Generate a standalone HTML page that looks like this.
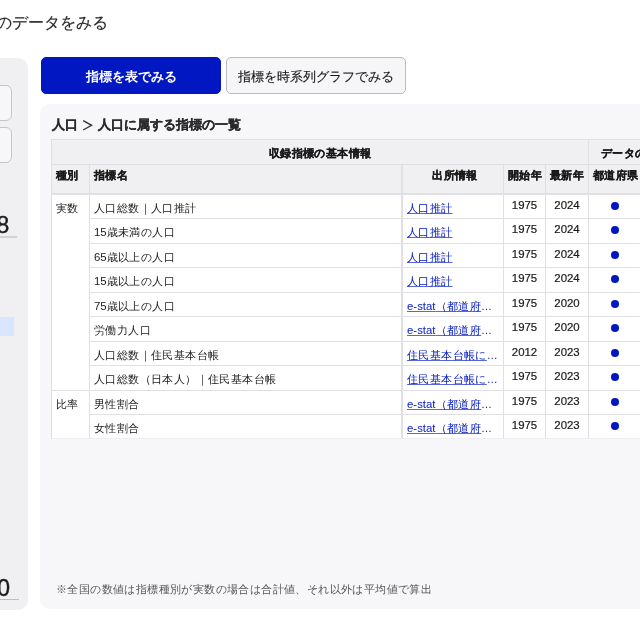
<!DOCTYPE html>
<html lang="ja">
<head>
<meta charset="utf-8">
<style>
*{box-sizing:border-box;margin:0;padding:0}
html,body{width:640px;height:638px;overflow:hidden;background:#fff}
body{will-change:transform}
body{position:relative;text-spacing-trim:space-all;font-family:"Liberation Sans",sans-serif;color:#1a1a1c}
.abs{position:absolute}
#title{left:-4px;top:13px;font-size:16px;line-height:20px;color:#2a2a2a;-webkit-text-stroke:0.15px #2a2a2a;white-space:nowrap}
#side{left:-20px;top:58px;width:48px;height:552px;background:#f0f0f3;border-radius:10px}
.inp{position:absolute;left:-40px;width:52px;height:36px;border:1px solid #c4c4c9;border-radius:6px;background:#f7f7fa}
.big{position:absolute;width:40px;font-size:23px;line-height:26px;color:#1a1a1a;-webkit-text-stroke:0.35px #1a1a1a;white-space:nowrap;text-align:right}
.uline{position:absolute;left:-20px;height:2px;background:#d2d2d6}
#strip{left:-20px;top:317px;width:34px;height:19px;background:#d9e6ff}
.btn{position:absolute;top:57px;height:36.5px;width:180px;border-radius:5px;font-size:13px;line-height:38px;text-align:center;white-space:nowrap}
#b1{left:41px;background:#0017c1;color:#fff;font-weight:bold;border:1px solid #0017c1}
#b2{left:226px;background:#f6f6f9;color:#1a1a1a;-webkit-text-stroke:0.15px #1a1a1a;border:1px solid #b8b8bd}
#main{left:40px;top:104px;width:640px;height:505px;background:#f7f7f9;border-radius:10px}
#mtitle{left:52px;top:116px;font-size:13px;line-height:18px;font-weight:bold;color:#2a2a2a;-webkit-text-stroke:0.2px #2a2a2a;white-space:nowrap}
#note{left:56px;top:580.5px;font-size:11px;letter-spacing:0.4px;line-height:16px;color:#555;white-space:nowrap}

#tbl{position:absolute;left:51px;top:139px;border-collapse:separate;border-spacing:0;table-layout:fixed;width:660px;border-left:1px solid #e0e0e4;border-top:1px solid #e0e0e4;font-size:11px;letter-spacing:0.4px;color:#1a1a1a}
#tbl th,#tbl td{border-right:1px solid #e0e0e4;border-bottom:1px solid #e0e0e4;padding:0 4px;white-space:nowrap;overflow:hidden}
#tbl th{background:#f0f0f3;font-weight:bold;text-align:center;-webkit-text-stroke:0.25px #1a1a1a}
#tbl tr.h1 th{height:25px;line-height:16px;vertical-align:top;padding-top:5px}
#tbl tr.h2 th{height:29.5px;line-height:16px;vertical-align:top;padding-top:2px;border-bottom-width:2px}
#tbl tr.h2 th.l{text-align:left}
#tbl td{background:#fff;height:24.5px;line-height:16px;vertical-align:top;padding-top:5px}
#tbl td.kind{padding-top:5px}
#tbl td.src{text-overflow:ellipsis}
#tbl td.name{border-right-width:2px}
#tbl td.src,#tbl th.src{}
#tbl td.src a{display:block;overflow:hidden;text-overflow:ellipsis;white-space:nowrap;color:#0017c1;text-decoration:underline;text-decoration-color:rgba(0,23,193,0.65)}
.lt{font-size:11.4px;letter-spacing:0}
#tbl td.yr{text-align:center;font-size:11.4px;letter-spacing:0;padding-top:2px;-webkit-text-stroke:0.2px #1a1a1a}
#tbl td.dotc{text-align:center;padding-top:2px}
#tbl tbody tr:last-child td{border-bottom-color:#eeeef1;height:24px}
#tbl tbody tr:last-child td.kind{border-bottom-color:#eeeef1}
.dot{display:inline-block;width:8px;height:8px;border-radius:50%;background:#0017c1;vertical-align:middle}
</style>
</head>
<body>
<div id="title" class="abs">のデータをみる</div>
<div id="side" class="abs"></div>
<div class="inp" style="top:85px"></div>
<div class="inp" style="top:127px"></div>
<div class="big" style="left:-30.8px;top:212px">8</div>
<div class="uline" style="top:236px;width:37px"></div>
<div id="strip" class="abs"></div>
<div class="big" style="left:-30px;top:574.5px">0</div>
<div class="uline" style="top:599px;width:38.6px;height:1px;background:#bdbdc2"></div>

<div class="btn" id="b1">指標を表でみる</div>
<div class="btn" id="b2">指標を時系列グラフでみる</div>

<div id="main" class="abs"></div>
<div id="mtitle" class="abs">人口 <span style="display:inline-block;width:13px"></span> 人口に属する指標の一覧</div>
<svg class="abs" style="left:82px;top:119px" width="12" height="13" viewBox="0 0 12 13"><polyline points="1.2,1.6 9.6,6.3 1.2,11.0" fill="none" stroke="#333" stroke-width="1.35"/></svg>

<table id="tbl">
<colgroup><col style="width:38px"><col style="width:313px"><col style="width:101px"><col style="width:42px"><col style="width:43px"><col style="width:53px"><col style="width:70px"></colgroup>
<thead>
<tr class="h1"><th colspan="5">収録指標の基本情報</th><th colspan="2" style="text-align:left;padding-left:12px">データの有無</th></tr>
<tr class="h2"><th class="l">種別</th><th class="l" style="border-right-width:2px">指標名</th><th class="src" style="padding-left:8px">出所情報</th><th>開始年</th><th>最新年</th><th>都道府県</th><th>市区町村</th></tr>
</thead>
<tbody>
<tr><td class="kind" rowspan="8">実数</td><td class="name">人口総数｜人口推計</td><td class="src"><a>人口推計</a></td><td class="yr">1975</td><td class="yr">2024</td><td class="dotc"><span class="dot"></span></td><td class="dotc"><span class="dot"></span></td></tr>
<tr><td class="name"><span class="lt">15</span>歳未満の人口</td><td class="src"><a>人口推計</a></td><td class="yr">1975</td><td class="yr">2024</td><td class="dotc"><span class="dot"></span></td><td class="dotc"><span class="dot"></span></td></tr>
<tr><td class="name"><span class="lt">65</span>歳以上の人口</td><td class="src"><a>人口推計</a></td><td class="yr">1975</td><td class="yr">2024</td><td class="dotc"><span class="dot"></span></td><td class="dotc"><span class="dot"></span></td></tr>
<tr><td class="name"><span class="lt">15</span>歳以上の人口</td><td class="src"><a>人口推計</a></td><td class="yr">1975</td><td class="yr">2024</td><td class="dotc"><span class="dot"></span></td><td class="dotc"><span class="dot"></span></td></tr>
<tr><td class="name"><span class="lt">75</span>歳以上の人口</td><td class="src"><a><span class="lt">e-stat</span>（都道府県データ）</a></td><td class="yr">1975</td><td class="yr">2020</td><td class="dotc"><span class="dot"></span></td><td class="dotc"><span class="dot"></span></td></tr>
<tr><td class="name">労働力人口</td><td class="src"><a><span class="lt">e-stat</span>（都道府県データ）</a></td><td class="yr">1975</td><td class="yr">2020</td><td class="dotc"><span class="dot"></span></td><td class="dotc"><span class="dot"></span></td></tr>
<tr><td class="name">人口総数｜住民基本台帳</td><td class="src"><a>住民基本台帳に基づく人口</a></td><td class="yr">2012</td><td class="yr">2023</td><td class="dotc"><span class="dot"></span></td><td class="dotc"><span class="dot"></span></td></tr>
<tr><td class="name">人口総数（日本人）｜住民基本台帳</td><td class="src"><a>住民基本台帳に基づく人口</a></td><td class="yr">1975</td><td class="yr">2023</td><td class="dotc"><span class="dot"></span></td><td class="dotc"><span class="dot"></span></td></tr>
<tr><td class="kind" rowspan="2" style="border-bottom-color:#eeeef1">比率</td><td class="name">男性割合</td><td class="src"><a><span class="lt">e-stat</span>（都道府県データ）</a></td><td class="yr">1975</td><td class="yr">2023</td><td class="dotc"><span class="dot"></span></td><td class="dotc"><span class="dot"></span></td></tr>
<tr><td class="name">女性割合</td><td class="src"><a><span class="lt">e-stat</span>（都道府県データ）</a></td><td class="yr">1975</td><td class="yr">2023</td><td class="dotc"><span class="dot"></span></td><td class="dotc"><span class="dot"></span></td></tr>
</tbody>
</table>
<div id="note" class="abs">※全国の数値は指標種別が実数の場合は合計値、それ以外は平均値で算出</div>
</body>
</html>
